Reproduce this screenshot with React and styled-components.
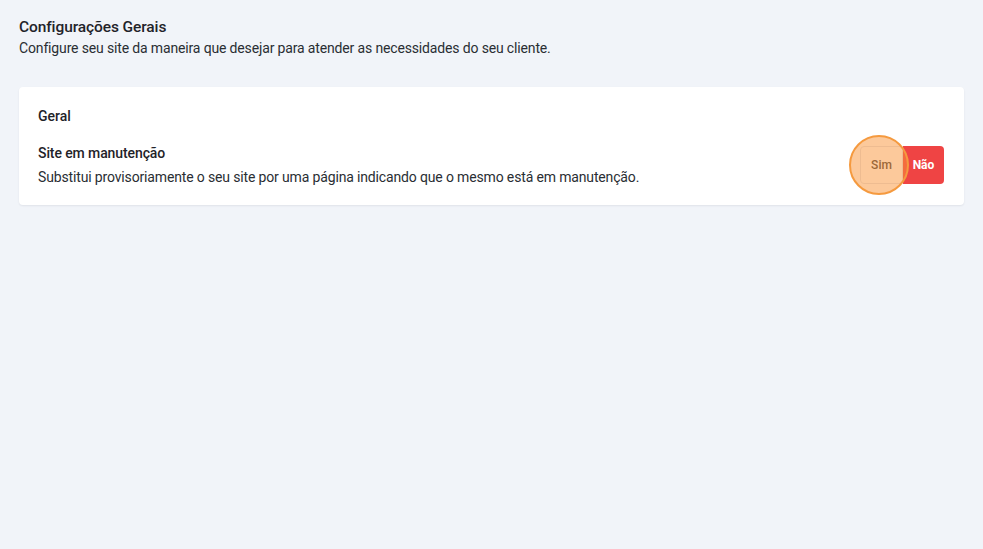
import styled, { createGlobalStyle } from "styled-components";

const Global = createGlobalStyle`
  html, body { margin: 0; padding: 0; background: #f1f4f9; }
  body { font-family: Roboto, "Liberation Sans", sans-serif; color: #1f2329; }
`;

const Page = styled.div`
  width: 983px;
  height: 549px;
  box-sizing: border-box;
  padding: 17px 19px;
`;

const Header = styled.div`
  display: flex;
  flex-direction: column;
  gap: 2px;
  margin-bottom: 29px;
`;

const Title = styled.h1`
  margin: 0;
  font-size: 15.5px;
  font-weight: 500;
  letter-spacing: -0.1px;
  line-height: 20px;
`;

const Subtitle = styled.p`
  margin: 0;
  font-size: 14px;
  line-height: 19px;
  letter-spacing: -0.15px;
  color: #2a2e33;
`;

const Card = styled.section`
  background: #fff;
  border-radius: 4px;
  box-shadow: 0 1px 2px rgba(20, 30, 50, 0.08);
  padding: 19px 20px 19px 19px;
`;

const Section = styled.div`
  font-size: 14px;
  font-weight: 500;
  line-height: 20px;
  margin-bottom: 17px;
`;

const Row = styled.div`
  display: flex;
  align-items: center;
  justify-content: space-between;
`;

const Info = styled.div`
  display: flex;
  flex-direction: column;
  gap: 5px;
`;

const Label = styled.div`
  font-size: 14px;
  font-weight: 500;
  line-height: 20px;
  letter-spacing: -0.1px;
`;

const Desc = styled.div`
  font-size: 14px;
  line-height: 18px;
  letter-spacing: -0.15px;
  color: #2a2e33;
`;

const Toggle = styled.div`
  position: relative;
  display: flex;
`;

const Option = styled.button`
  height: 38px;
  padding: 0 ${(p) => (p.$active ? "8px" : "10px")};
  border: ${(p) => (p.$active ? "none" : "1px solid #e2e5ea")};
  border-radius: ${(p) => (p.$first ? "4px 0 0 4px" : "0 4px 4px 0")};
  background: ${(p) => (p.$active ? "#ef4444" : "#fff")};
  color: ${(p) => (p.$active ? "#fff" : "#3a3a3a")};
  font-family: Roboto, "Liberation Sans", sans-serif;
  font-size: 12px;
  font-weight: ${(p) => (p.$active ? 700 : 500)};
  cursor: pointer;
  min-width: ${(p) => (p.$active ? "41px" : "43px")};
`;

const Highlight = styled.span`
  position: absolute;
  left: -11px;
  top: -11px;
  width: 56px;
  height: 56px;
  border-radius: 50%;
  background: rgba(249, 148, 56, 0.5);
  border: 2px solid #f59a3f;
  pointer-events: none;
`;

export default function App() {
  return (
    <>
      <Global />
      <Page>
        <Header>
          <Title>Configurações Gerais</Title>
          <Subtitle>
            Configure seu site da maneira que desejar para atender as necessidades do seu cliente.
          </Subtitle>
        </Header>
        <Card>
          <Section>Geral</Section>
          <Row>
            <Info>
              <Label>Site em manutenção</Label>
              <Desc>
                Substitui provisoriamente o seu site por uma página indicando que o mesmo está em manutenção.
              </Desc>
            </Info>
            <Toggle>
              <Option $first>Sim</Option>
              <Option $active>Não</Option>
              <Highlight />
            </Toggle>
          </Row>
        </Card>
      </Page>
    </>
  );
}
